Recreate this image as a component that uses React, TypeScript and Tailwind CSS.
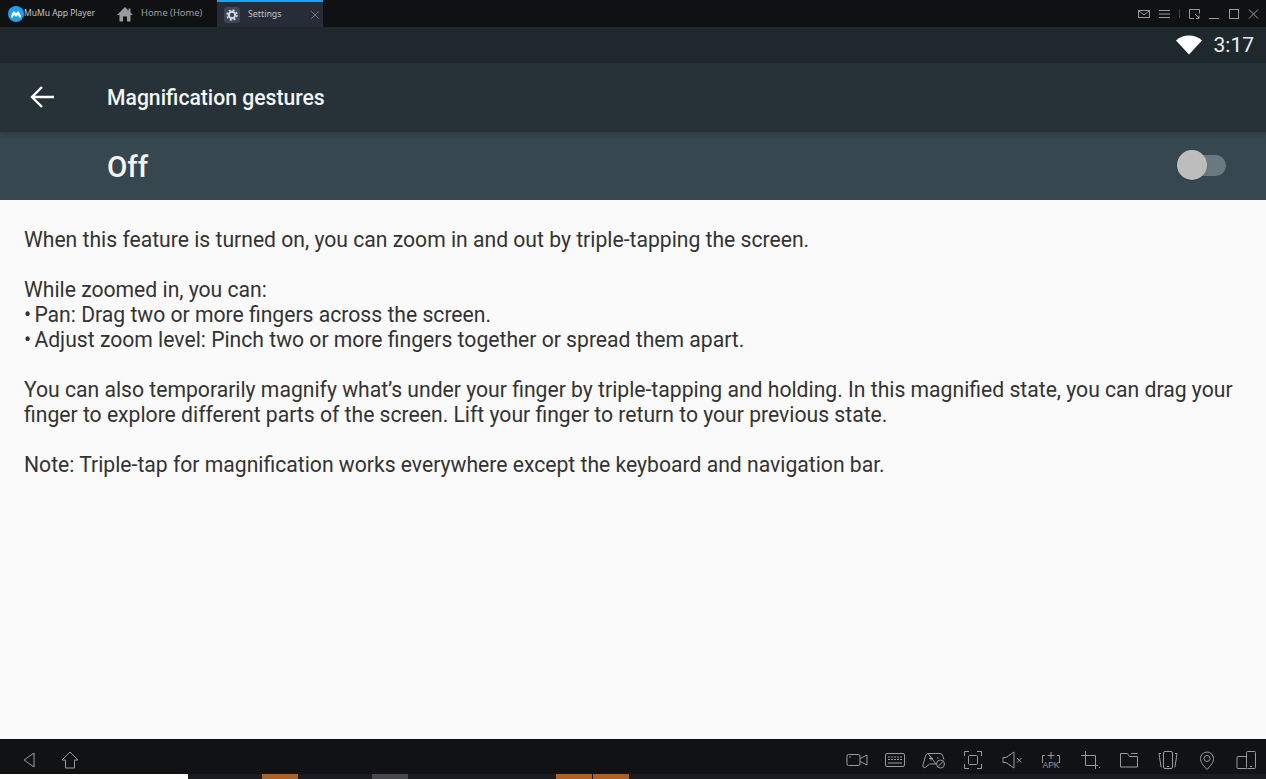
import React from 'react';
import { X } from 'lucide-react';

const Ic: React.FC<{ w?: number; h?: number; children: React.ReactNode }> = ({ w = 24, h = 24, children }) => (
  <svg width={w} height={h} viewBox={`0 0 ${w} ${h}`} fill="none" stroke="#9a9a9a" strokeWidth="1">
    {children}
  </svg>
);

const App: React.FC = () => {
  return (
    <div className="flex flex-col h-[779px] w-[1266px] overflow-hidden font-['Roboto',sans-serif]">
      {/* window title bar */}
      <div className="flex h-[27px] shrink-0 items-center justify-between bg-[#101113] text-[#b4b4b4]">
        <div className="flex h-full items-center">
          <div className="flex w-[117px] items-center pl-2">
            <svg width="16" height="16" viewBox="0 0 16 16">
              <circle cx="8" cy="8" r="8" fill="#1ea0f0" />
              <path d="M4 10.500l2-4 2 3 2-3 2 4" fill="none" stroke="#fff" strokeWidth="2.200" strokeLinecap="round" strokeLinejoin="round" />
            </svg>
            <span className="font-['Noto_Sans',sans-serif] text-[8.5px] text-[#c4c4c4]">MuMu App Player</span>
          </div>
          <div className="flex w-[100px] items-center">
            <svg width="16" height="16" viewBox="0 0 16 16" className="mr-[8px]">
              <path d="M8 1l3.500 3.500V2.500h2v4L16 9h-2.500v6.500H10v-5H6v5H2.500V9H0z" fill="#9a9a9a" />
            </svg>
            <span className="font-['Noto_Sans',sans-serif] text-[9.4px] text-[#9e9e9e]">Home (Home)</span>
          </div>
          <div className="flex h-full w-[106px] items-center border-t-2 border-[#1ea0f0] bg-[#262d38] pl-[7px]">
            <div className="flex h-[16px] w-[16px] items-center justify-center rounded-[3px] bg-[#3c4657]">
              <svg width="12" height="12" viewBox="0 0 12 12" fill="none">
                <circle cx="6" cy="6" r="3.200" stroke="#d4dae4" strokeWidth="2" />
                <circle cx="6" cy="6" r="5" stroke="#d4dae4" strokeWidth="1.500" strokeDasharray="2 1.930" />
              </svg>
            </div>
            <span className="ml-[8px] font-['Noto_Sans',sans-serif] text-[8.8px] text-[#c4c4c4]">Settings</span>
            <X size={14} strokeWidth={1} className="ml-[27px] text-[#a8a8a8]" />
          </div>
        </div>
        <div className="flex items-center gap-[9px] pr-[7px]">
          <Ic w={12} h={12}><rect x="0.5" y="2.500" width="11" height="7" /><path d="M1 3l5 4 5-4" /></Ic>
          <Ic w={11} h={12}><path d="M0 2.500h11M0 6h11M0 9.500h11" /></Ic>
          <div className="h-[9px] w-px bg-[#3c3c3c]" />
          <Ic w={11} h={12}><path d="M5 10.500H.5v-9h10v4M6 6l4 4M10 7.500v3H7" /></Ic>
          <Ic w={10} h={12}><path d="M0 10.500h10" /></Ic>
          <Ic w={11} h={12}><rect x="1.500" y="1.500" width="9" height="9" /></Ic>
          <Ic w={11} h={12}><path d="M1 1.500l9 9M10 1.500l-9 9" /></Ic>
        </div>
      </div>

      {/* android status bar */}
      <div className="flex h-[36px] shrink-0 items-center justify-end bg-[#1f282d] pr-[12px]">
        <svg width="26" height="20" viewBox="0 0 26 20" className="mr-[12px]">
          <path d="M0 5.500C3.500 2.300 8 .5 13 .5s9.500 1.800 13 5L13 19.500z" fill="#fff" />
        </svg>
        <span className="text-[21px] leading-none text-[#eceff1]">3:17</span>
      </div>

      {/* toolbar */}
      <div className="relative z-10 flex h-[69px] shrink-0 items-center bg-[#263238] pl-[30px] shadow-[0_2px_4px_rgba(0,0,0,0.2)]">
        <svg width="24" height="24" viewBox="0 0 24 24" fill="none" stroke="#fff" strokeWidth="2.400" className="mb-[2px]">
          <path d="M24 12H2M12 2L2 12l10 10" />
        </svg>
        <span className="ml-[53px] text-[21.15px] font-medium text-[#f5f5f5]">Magnification gestures</span>
      </div>

      {/* master switch row */}
      <div className="flex h-[68px] shrink-0 items-center justify-between bg-[#37474f] pl-[107px] pr-[40px]">
        <span className="pt-[2px] text-[29.5px] font-medium text-[#f5f5f5]">Off</span>
        <div className="relative mb-[2px] h-[21px] w-[34px] rounded-full bg-[#6b7a80]">
          <div className="absolute left-[-15px] top-[-5px] h-[30px] w-[30px] rounded-full bg-[#bdbdbd] shadow" />
        </div>
      </div>

      {/* description */}
      <div className="flex-1 bg-[#fafafa] px-6 pt-[27px] text-[21.15px] leading-[25px] text-[#333333]">
        <p>When this feature is turned on, you can zoom in and out by triple-tapping the screen.</p>
        <p className="mt-[25px]">While zoomed in, you can:</p>
        <p><span className="mr-[-2px]">•</span> Pan: Drag two or more fingers across the screen.</p>
        <p><span className="mr-[-2px]">•</span> Adjust zoom level: Pinch two or more fingers together or spread them apart.</p>
        <p className="mt-[25px]">You can also temporarily magnify what’s under your finger by triple-tapping and holding. In this magnified state, you can drag your finger to explore different parts of the screen. Lift your finger to return to your previous state.</p>
        <p className="mt-[25px]">Note: Triple-tap for magnification works everywhere except the keyboard and navigation bar.</p>
      </div>

      {/* emulator bottom bar */}
      <div className="flex h-[40px] shrink-0 flex-col bg-[#111214]">
        <div className="flex h-[35px] items-center justify-between pl-[23px] pr-[8px] pt-[7px]">
          <div className="flex items-center gap-[26px]">
            <Ic w={12} h={16}><path d="M11 1v14L1 8z" /></Ic>
            <Ic w={18} h={18}><path d="M1 9l8-8 8 8h-3.500v8h-9V9z" /></Ic>
          </div>
          <div className="flex items-center gap-[15px]">
            {/* video */}
            <Ic>
              <rect x="3" y="6.500" width="13" height="11" rx="1.500" />
              <path d="M16 10.500l7-3.500v10l-7-3.500" />
              <circle cx="6" cy="9" r="0.800" fill="#9a9a9a" stroke="none" />
            </Ic>
            {/* keyboard */}
            <Ic>
              <rect x="2.500" y="5.500" width="19" height="13" rx="1.500" />
              <path d="M5 9h14M5 11.500h14" strokeDasharray="2 1" />
              <path d="M5 15h14" />
            </Ic>
            {/* gamepad */}
            <Ic>
              <path d="M6 5.500h12c1.500 0 2.500 1 3 3l.8 3M14 16H7.500L3.500 19.500c-2 .5-3-.5-2.500-2.500L3.500 8C4 6.500 5 5.500 6 5.500z" />
              <path d="M7 10.500h4M9 8.500v4M15 10h1.500" />
              <circle cx="18.500" cy="16" r="4" />
              <path d="M16 18.500l5-5" />
            </Ic>
            {/* screenshot */}
            <Ic>
              <path d="M3.500 8V3.500H8M16 3.500h4.500V8M20.500 16v4.500H16M8 20.500H3.500V16" />
              <rect x="7.500" y="7.500" width="9" height="9" rx="1" />
            </Ic>
            {/* mute */}
            <Ic>
              <path d="M3 9.500v5h3L14 20V4L6 9.500z" />
              <path d="M17 10l4.500 4.500M21.500 10L17 14.500" />
            </Ic>
            {/* apk */}
            <Ic>
              <path d="M3.500 15V7.500h2.500M20.500 15V7.500H18M12 4v7M8.500 7.500h7" />
              <text x="12" y="20" textAnchor="middle" fontSize="8.500" fontFamily="'Liberation Sans', sans-serif" fill="#9a9a9a" stroke="none">APK</text>
            </Ic>
            {/* crop */}
            <Ic>
              <path d="M7.500 3v14.500H20M3 7.500h14.500V21M21 19.500h1" />
            </Ic>
            {/* folder */}
            <Ic>
              <path d="M3.500 5.500h7l2 3h8v10.500h-17zM14 5.500h6.500" />
            </Ic>
            {/* rotate */}
            <Ic>
              <rect x="7.500" y="3.500" width="9" height="17" rx="1.500" />
              <path d="M5 5.500H3L5 19h.5M19 5.500h2L19 19h-.5M11 18.500h2" />
            </Ic>
            {/* location */}
            <Ic>
              <path d="M12 21.500c-4-4-6.500-7.500-6.500-11a6.500 6.500 0 0 1 13 0c0 3.500-2.500 7-6.500 11z" />
              <circle cx="12" cy="10.500" r="3" />
            </Ic>
            {/* multi window */}
            <Ic>
              <rect x="12.500" y="3.500" width="9" height="17" rx="1" />
              <path d="M12.500 8.500H4a1 1 0 0 0-1 1v10a1 1 0 0 0 1 1h8.500M16 18.500h2" />
            </Ic>
          </div>
        </div>
        <div className="flex h-[5px] bg-[#1b1c21]">
          <div className="w-[188px] bg-white" />
          <div className="ml-[74px] w-[36px] bg-[#ad6126]" />
          <div className="ml-[74px] w-[36px] bg-[#48484c]" />
          <div className="ml-[148px] w-[36px] bg-[#ad6126]" />
          <div className="ml-px w-[36px] bg-[#ad6126]" />
        </div>
      </div>
    </div>
  );
};

export default App;
